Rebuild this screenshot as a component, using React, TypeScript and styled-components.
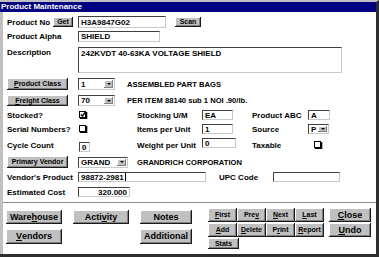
import styled, { createGlobalStyle } from "styled-components";

const GlobalStyle = createGlobalStyle`
  *, *::before, *::after {
    margin: 0;
    padding: 0;
    box-sizing: border-box;
  }

  html, body {
    width: 379px;
    height: 257px;
    overflow: hidden;
    background: #c0c0c0;
    font-family: "Liberation Sans", Arial, sans-serif;
  }
`;

const Window = styled.div`
  width: 379px;
  height: 257px;
  display: flex;
  flex-direction: column;
  border-top: 2px solid #c0c0c0;
  border-right: 3px solid #2e2e2e;
  border-bottom: 3px solid #2e2e2e;
  background: #fff;
`;

const TitleBar = styled.div`
  height: 10px;
  flex: none;
  background: #000080;
  color: #fff;
  font-size: 8px;
  font-weight: bold;
  line-height: 10px;
  padding-left: 1px;
  white-space: nowrap;
`;

const Body = styled.div`
  flex: 1;
  display: flex;
  flex-direction: column;
  border-left: 3px solid #c0c0c0;
`;

const Form = styled.div`
  display: flex;
  flex-direction: column;
  padding-left: 4px;
`;

const Row = styled.div<{ $mt: number; $h: number; $start?: boolean }>`
  display: flex;
  align-items: ${(p) => (p.$start ? "flex-start" : "center")};
  margin-top: ${(p) => p.$mt}px;
  height: ${(p) => p.$h}px;
`;

const TripleRow = styled.div<{ $mt: number; $h: number }>`
  display: grid;
  grid-template-columns: 71px 59px 65px 50px 56px auto;
  align-items: center;
  margin-top: ${(p) => p.$mt}px;
  height: ${(p) => p.$h}px;
`;

const Label = styled.span<{ $w?: number }>`
  display: flex;
  align-items: center;
  width: ${(p) => (p.$w ? `${p.$w}px` : "auto")};
  flex: none;
  font-size: 8px;
  font-weight: bold;
  color: #000;
  white-space: nowrap;
`;

const Info = styled.span<{ $ml: number }>`
  margin-left: ${(p) => p.$ml}px;
  font-size: 7.6px;
  font-weight: bold;
  white-space: nowrap;
`;

const Field = styled.div<{ $w: number; $h: number; $right?: boolean; $ml?: number; $self?: string }>`
  width: ${(p) => p.$w}px;
  height: ${(p) => p.$h}px;
  margin-left: ${(p) => p.$ml ?? 0}px;
  align-self: ${(p) => p.$self ?? "auto"};
  flex: none;
  display: flex;
  align-items: ${(p) => (p.$h > 16 ? "flex-start" : "center")};
  justify-content: ${(p) => (p.$right ? "flex-end" : "flex-start")};
  padding: ${(p) => (p.$h > 16 ? "1px 2px" : "0 2px")};
  background: #fff;
  border: 1px solid;
  border-color: #404040 #c8c8c8 #c8c8c8 #404040;
  font-size: 8px;
  font-weight: bold;
  line-height: 9px;
  white-space: nowrap;
  overflow: hidden;
`;

const Caret = styled.span`
  display: inline-block;
  width: 1px;
  height: 8px;
  background: #000;
  margin-left: 1px;
`;

const SelectBox = styled.div<{ $w: number; $h: number }>`
  width: ${(p) => p.$w}px;
  height: ${(p) => p.$h}px;
  flex: none;
  display: flex;
  align-items: stretch;
  background: #fff;
  border: 1px solid;
  border-color: #404040 #c8c8c8 #c8c8c8 #404040;
  font-size: 8px;
  font-weight: bold;
`;

const SelectText = styled.span`
  flex: 1;
  display: flex;
  align-items: center;
  padding-left: 2px;
`;

const DropButton = styled.span`
  width: 9px;
  margin: 1px;
  background: #c0c0c0;
  box-shadow: inset -1px -1px #808080, inset 1px 1px #fff;
  display: flex;
  align-items: center;
  justify-content: center;

  &::after {
    content: "";
    border-left: 2px solid transparent;
    border-right: 2px solid transparent;
    border-top: 2px solid #000;
  }
`;

const WinButton = styled.button<{ $w?: number; $h: number; $size?: number }>`
  width: ${(p) => (p.$w ? `${p.$w}px` : "100%")};
  height: ${(p) => p.$h}px;
  flex: none;
  display: flex;
  align-items: center;
  justify-content: center;
  background: #c0c0c0;
  border: none;
  box-shadow: inset -1px -1px #1a1a1a, inset 1px 1px #fff, inset -2px -2px #808080;
  font-family: "Liberation Sans", Arial, sans-serif;
  font-size: ${(p) => p.$size ?? 7}px;
  font-weight: bold;
  color: #000;
  white-space: nowrap;
  padding: 0 0 1px;
`;

const LabelButtonWrap = styled.div`
  width: 71px;
  flex: none;
  display: flex;
  align-items: center;
`;

const Separator = styled.div`
  margin-top: 5px;
  height: 1px;
  background: #8a8a8a;
`;

const ButtonArea = styled.div`
  display: flex;
  align-items: flex-start;
  padding: 5px 0 0 3px;
`;

const MainButtons = styled.div`
  display: grid;
  grid-template-columns: 56px 56px 52px;
  grid-template-rows: 14px 15px;
  column-gap: 11px;
  row-gap: 5px;
  margin-top: 2px;
`;

const NavBlock = styled.div`
  display: flex;
  flex-direction: column;
  margin-left: 16px;
`;

const NavGrid = styled.div`
  display: grid;
  grid-template-columns: repeat(4, 29px);
  grid-template-rows: 14px 14px;
  row-gap: 1px;
`;

const StatsSlot = styled.div`
  margin-top: 1px;
`;

const SideButtons = styled.div`
  display: grid;
  grid-template-rows: 14px 14px;
  row-gap: 1px;
  margin-left: 5px;
  width: 42px;
`;

function Check({ checked }: { checked?: boolean }) {
  return (
    <svg width="9" height="8" viewBox="0 0 9 8">
      <rect x="0.5" y="0.5" width="6" height="6" fill="#fff" stroke="#000" />
      <path d="M7.5 1v6.5H1" stroke="#000" strokeWidth="1.6" fill="none" />
      {checked && (
        <path d="M1.8 3.4l1.6 1.8L6.6 0.6" stroke="#000" strokeWidth="1.4" fill="none" />
      )}
    </svg>
  );
}

function Select({ w, h, value }: { w: number; h: number; value: string }) {
  return (
    <SelectBox $w={w} $h={h}>
      <SelectText>{value}</SelectText>
      <DropButton />
    </SelectBox>
  );
}

const CheckCell = styled.span<{ $ml?: number }>`
  display: flex;
  align-items: center;
  padding-left: ${(p) => p.$ml ?? 1}px;
`;

export default function App() {
  return (
    <>
      <GlobalStyle />
      <Window>
        <TitleBar>Product Maintenance</TitleBar>
        <Body>
          <Form>
            <Row $mt={4} $h={12}>
              <LabelButtonWrap>
                <Label $w={46}>Product No</Label>
                <WinButton $w={20} $h={10}>Get</WinButton>
              </LabelButtonWrap>
              <Field $w={88} $h={12}>H3A9847G02</Field>
              <WinButton $w={26} $h={10} style={{ marginLeft: 9 }}>
                Scan
              </WinButton>
            </Row>
            <Row $mt={3} $h={11}>
              <Label $w={71}>Product Alpha</Label>
              <Field $w={82} $h={11}>SHIELD</Field>
            </Row>
            <Row $mt={5} $h={26} $start>
              <Label $w={71} style={{ marginTop: 1 }}>Description</Label>
              <Field $w={264} $h={26}>242KVDT 40-63KA VOLTAGE SHIELD</Field>
            </Row>
            <Row $mt={5} $h={12}>
              <LabelButtonWrap>
                <WinButton $w={61} $h={12}>
                  <u>P</u>roduct Class
                </WinButton>
              </LabelButtonWrap>
              <Select w={37} h={12} value="1" />
              <Info $ml={12}>ASSEMBLED PART BAGS</Info>
            </Row>
            <Row $mt={5} $h={11}>
              <LabelButtonWrap>
                <WinButton $w={61} $h={11}>
                  <u>F</u>reight Class
                </WinButton>
              </LabelButtonWrap>
              <Select w={37} h={11} value="70" />
              <Info $ml={12}>PER ITEM 88140 sub 1 NOI .90/lb.</Info>
            </Row>
            <TripleRow $mt={4} $h={10}>
              <Label>Stocked?</Label>
              <CheckCell>
                <Check checked />
              </CheckCell>
              <Label>Stocking U/M</Label>
              <Field $w={31} $h={10}>EA</Field>
              <Label>Product ABC</Label>
              <Field $w={22} $h={10}>A</Field>
            </TripleRow>
            <TripleRow $mt={4} $h={10}>
              <Label>Serial Numbers?</Label>
              <CheckCell>
                <Check />
              </CheckCell>
              <Label>Items per Unit</Label>
              <Field $w={31} $h={10}>1</Field>
              <Label>Source</Label>
              <Select w={21} h={10} value="P" />
            </TripleRow>
            <TripleRow $mt={4} $h={14}>
              <Label>Cycle Count</Label>
              <Field $w={11} $h={10} $ml={1} $self="end">0</Field>
              <Label>Weight per Unit</Label>
              <Field $w={34} $h={10} $self="start">0</Field>
              <Label>Taxable</Label>
              <CheckCell $ml={6}>
                <Check />
              </CheckCell>
            </TripleRow>
            <Row $mt={4} $h={12}>
              <LabelButtonWrap>
                <WinButton $w={61} $h={12}>
                  Primary Vendor
                </WinButton>
              </LabelButtonWrap>
              <Select w={50} h={11} value="GRAND" />
              <Info $ml={9}>GRANDRICH CORPORATION</Info>
            </Row>
            <Row $mt={4} $h={10}>
              <Label $w={71}>Vendor's Product</Label>
              <Field $w={128} $h={10}>
                98872-2981
                <Caret />
              </Field>
              <Label $w={54} style={{ marginLeft: 13 }}>UPC Code</Label>
              <Field $w={67} $h={10} />
            </Row>
            <Row $mt={5} $h={10}>
              <Label $w={71}>Estimated Cost</Label>
              <Field $w={52} $h={10} $right>320.000</Field>
            </Row>
          </Form>
          <Separator />
          <ButtonArea>
            <MainButtons>
              <WinButton $h={14} $size={9}>
                Ware<u>h</u>ouse
              </WinButton>
              <WinButton $h={14} $size={9}>
                Acti<u>v</u>ity
              </WinButton>
              <WinButton $h={14} $size={9}>
                Notes
              </WinButton>
              <WinButton $h={15} $size={9}>
                <u>V</u>endors
              </WinButton>
              <span />
              <WinButton $h={15} $size={9}>
                Additional
              </WinButton>
            </MainButtons>
            <NavBlock>
              <NavGrid>
                <WinButton $h={14}>
                  <u>F</u>irst
                </WinButton>
                <WinButton $h={14}>
                  Pre<u>v</u>
                </WinButton>
                <WinButton $h={14}>
                  <u>N</u>ext
                </WinButton>
                <WinButton $h={14}>
                  <u>L</u>ast
                </WinButton>
                <WinButton $h={14}>
                  <u>A</u>dd
                </WinButton>
                <WinButton $h={14}>
                  <u>D</u>elete
                </WinButton>
                <WinButton $h={14}>
                  P<u>r</u>int
                </WinButton>
                <WinButton $h={14}>
                  <u>R</u>eport
                </WinButton>
              </NavGrid>
              <StatsSlot>
                <WinButton $w={31} $h={11}>
                  Stats
                </WinButton>
              </StatsSlot>
            </NavBlock>
            <SideButtons>
              <WinButton $h={14} $size={9}>
                <u>C</u>lose
              </WinButton>
              <WinButton $h={14} $size={9}>
                <u>U</u>ndo
              </WinButton>
            </SideButtons>
          </ButtonArea>
        </Body>
      </Window>
    </>
  );
}
